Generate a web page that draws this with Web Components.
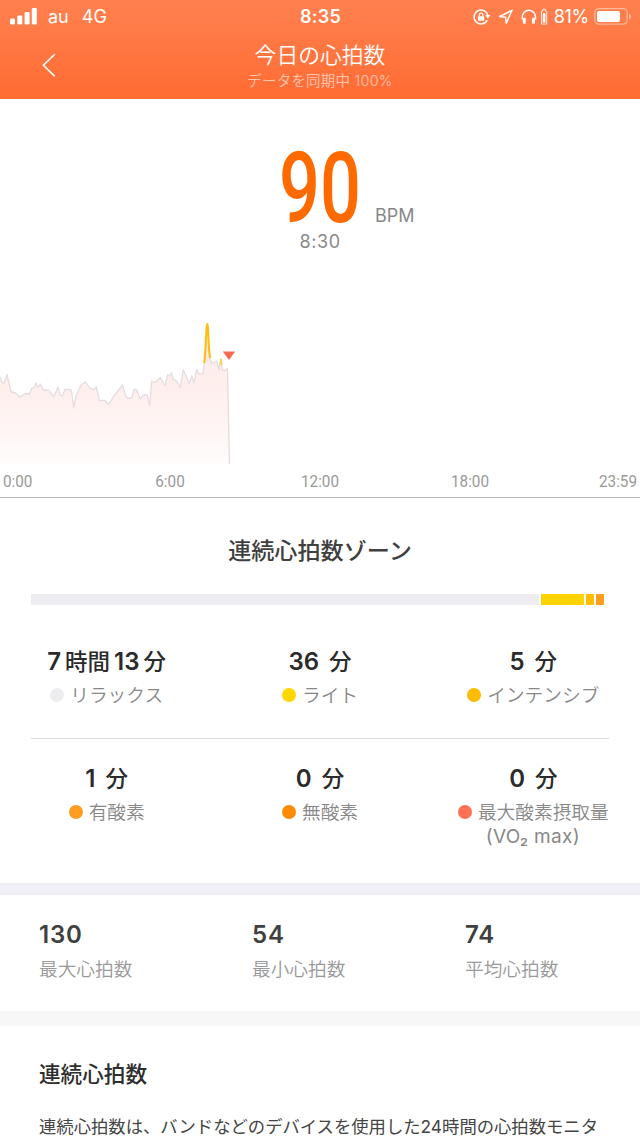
<!DOCTYPE html>
<html lang="ja">
<head>
<meta charset="utf-8">
<title>今日の心拍数</title>
<style>
  body {
    margin: 0;
    width: 640px;
    height: 1138px;
    overflow: hidden;
    background: #fff;
    font-family: Inter, 'Noto Sans CJK JP', sans-serif;
    color: #333;
  }
</style>
</head>
<body>
<heart-rate-page></heart-rate-page>

<script>
/**
 * @class StatusBar
 * @classdesc Phone status bar: signal, carrier, clock and battery.
 */
class StatusBar extends HTMLElement {
  shadowRoot = this.attachShadow({ mode: 'open' });

  connectedCallback () {
    this.shadowRoot.innerHTML = `
      <style>
        :host {
          display: grid;
          grid-template-columns: 1fr auto 1fr;
          align-items: center;
          height: 33px;
          padding: 0 9px 0 10px;
          box-sizing: border-box;
          color: #fff;
          font-size: 18px;
          line-height: 33px;
        }
        div { display: flex; align-items: center; }
        svg { display: block; flex: none; }
        .carrier { margin-left: 11px; }
        .network { margin-left: 13px; }
        .time { font-weight: 600; font-size: 18px; letter-spacing: 0.3px; }
        .right { justify-content: flex-end; }
        .percent { margin: 0 5px 0 5px; letter-spacing: -0.3px; }
      </style>
      <div>
        <svg width="27" height="17" viewBox="0 0 27 17" fill="#fff">
          <rect x="0" y="10.5" width="5" height="6" rx="1.3"/>
          <rect x="7.3" y="7.5" width="5" height="9" rx="1.3"/>
          <rect x="14.6" y="4" width="5" height="12.5" rx="1.3"/>
          <rect x="21.8" y="0" width="5" height="16.5" rx="1.3"/>
        </svg>
        <span class="carrier">au</span>
        <span class="network">4G</span>
      </div>
      <span class="time">8:35</span>
      <div class="right">
        <svg width="77" height="18" viewBox="473 7.5 77 18" fill="none" stroke="#fff" stroke-width="1.5">
          <path d="M488.3 19.6A7 7 0 1 1 488.9 15"/>
          <path d="M486.3 14.6h5l-2.5 3.6z" fill="#fff" stroke="none"/>
          <rect x="479" y="15.7" width="6.2" height="4.6" rx=".6" fill="#fff" stroke="none"/>
          <path d="M480.3 16v-1.6a1.8 1.8 0 0 1 3.6 0V16" stroke-width="1.2"/>
          <path d="M513 9.8L500.6 16l6 .7.6 6z" stroke-linejoin="round"/>
          <path d="M523.3 19v-2.6a6.6 6.6 0 0 1 13.2 0V19"/>
          <rect x="523.8" y="17.2" width="3" height="6" rx="1" fill="#fff" stroke="none"/>
          <rect x="533" y="17.2" width="3" height="6" rx="1" fill="#fff" stroke="none"/>
          <path d="M543.8 8.8h2.6v1.8h1.3v13h-5.2v-13h1.3z" stroke-width="1" opacity=".85"/>
          <rect x="543.8" y="12.6" width="2.6" height="9.6" fill="#fff" stroke="none"/>
        </svg>
        <span class="percent">81%</span>
        <svg width="37" height="18" viewBox="0 .5 37 18" fill="#fff">
          <rect x=".8" y="1.2" width="32.4" height="15.4" rx="4" fill="none" stroke="#fff" stroke-opacity=".45" stroke-width="1.3"/>
          <rect x="3" y="3.4" width="23" height="11" rx="2"/>
          <path d="M35 6q2 .8 2 3t-2 3z" opacity=".5"/>
        </svg>
      </div>
    `;
  }
}

/**
 * @class NavBar
 * @classdesc Back button, page title and the sync state below it.
 */
class NavBar extends HTMLElement {
  shadowRoot = this.attachShadow({ mode: 'open' });

  connectedCallback () {
    this.shadowRoot.innerHTML = `
      <style>
        :host {
          display: grid;
          grid-template-columns: 1fr auto 1fr;
          height: 66px;
          color: #fff;
          text-align: center;
        }
        svg { display: block; margin: 20px 0 0 41px; }
        h1 { margin: 8px 0 0; font-size: 21.8px; line-height: 28px; font-weight: 350; }
        p { margin: 2px 0 0; font-size: 14.4px; line-height: 20px; font-weight: 350; opacity: .6; letter-spacing: .3px; }
      </style>
      <svg width="16" height="26" viewBox="0 0 16 26" fill="none" stroke="#fff" stroke-width="1.6">
        <path d="M13.8 1.2L2.4 12.3l11.4 11"/>
      </svg>
      <div>
        <h1><slot></slot></h1>
        <p><slot name="status"></slot></p>
      </div>
    `;
  }
}

/**
 * @class BpmReading
 * @classdesc Large reading for the selected time.
 */
class BpmReading extends HTMLElement {
  shadowRoot = this.attachShadow({ mode: 'open' });

  connectedCallback () {
    this.shadowRoot.innerHTML = `
      <style>
        :host { display: block; height: 213px; padding-top: 48px; box-sizing: border-box; }
        .row { display: grid; grid-template-columns: 1fr 82px 1fr; align-items: baseline; height: 84px; }
        .value {
          grid-column: 2;
          font: 500 98px/84px Roboto, sans-serif;
          color: #ff6a00;
          white-space: nowrap;
          transform: scaleX(.735);
          transform-origin: 0 0;
        }
        .unit { margin-left: 14px; font-size: 18px; line-height: 22px; color: #888; }
        .time { text-align: center; font-size: 18px; line-height: 22px; letter-spacing: .6px; color: #888; }
      </style>
      <div class="row">
        <span class="value">${this.getAttribute('value')}</span>
        <span class="unit">BPM</span>
      </div>
      <div class="time">${this.getAttribute('time')}</div>
    `;
  }
}

/**
 * @class DayChart
 * @classdesc Heart rate curve of the day with its time axis.
 */
class DayChart extends HTMLElement {
  shadowRoot = this.attachShadow({ mode: 'open' });

  // x, y pairs; y counts from the top of the chart
  before = '0,66 1.7,71 4,72.5 7,63.5 11,81 15.5,82 20,86.3 25,82.5 29.5,83 31.5,77.5 34,77 36,72 38,76.5 40.3,73 43.3,79 49,79.3 53.7,86 58,76 60,84 62.5,85 64.7,78.5 70,78.5 71.5,80 73.7,96.5 76,85 81,74 85.7,71 90,77.5 94.3,78.5 96.3,75.5 99.3,89.5 105,89.5 108.5,93.5 115,83.5 122.7,74 125.3,84 127.3,87.5 132,86.5 134,78.5 136.3,78.5 140.3,88 143.3,84 147.3,84 149.7,94.5 151.7,70 154.7,71.7 160.3,66.5 165,74.7 167.7,63.7 169.7,65 171.7,61.7 173.3,68.7 175.7,69 180.3,76.5 183.3,58.7 189.3,72.5 191.7,64.7 194,71.7 196.7,58.7 199.3,63 203,62.7 204.3,52';
  peak = '204.3,52 205.4,38 206.6,17 207.3,13 208,17 209,38 210,47';
  after = '210,47 211.7,52.7 216.7,50 219,59 221,48 222.3,58 224.3,60 227.5,57.5 229.4,153';

  connectedCallback () {
    this.shadowRoot.innerHTML = `
      <style>
        :host { display: block; height: 186px; border-bottom: 1px solid #bababa; box-sizing: border-box; }
        svg { display: block; }
        .axis { display: flex; justify-content: space-between; padding: 0 3px; }
        .axis span {
          width: 34px;
          display: flex;
          justify-content: center;
          font: 400 16.8px/20px Roboto, sans-serif;
          color: #999;
          transform: scaleX(.91);
          padding-top: 5px;
        }
        .axis span:first-child { justify-content: flex-start; transform-origin: left; }
        .axis span:last-child { justify-content: flex-end; transform-origin: right; }
      </style>
      <svg width="640" height="154" viewBox="0 1 640 154" fill="none" stroke-linejoin="round">
        <defs>
          <linearGradient id="area" x1="0" y1="30" x2="0" y2="154" gradientUnits="userSpaceOnUse">
            <stop offset="0" stop-color="#fdeae8"/>
            <stop offset=".45" stop-color="#fef0ee"/>
            <stop offset="1" stop-color="#fffcfc"/>
          </linearGradient>
        </defs>
        <polygon fill="url(#area)" points="${this.before} 207.3,26 210,47 ${this.after} 0,153"/>
        <polyline stroke="#e5dcdf" stroke-width="1.3" points="${this.before}"/>
        <polyline stroke="#e5dcdf" stroke-width="1.3" points="${this.after}"/>
        <polyline stroke="#ffbd14" stroke-width="2.1" points="${this.peak}"/>
        <polyline stroke="#ffd064" stroke-width="1.4" points="219.8,54 221,48 221.8,54"/>
        <path fill="#f86a50" d="M222.8 40.5h12.4l-6.2 8.5z"/>
      </svg>
      <div class="axis">
        <span>0:00</span><span>6:00</span><span>12:00</span><span>18:00</span><span>23:59</span>
      </div>
    `;
  }
}

/**
 * @class ZoneItem
 * @classdesc Time spent in one zone, with its coloured label.
 */
class ZoneItem extends HTMLElement {
  shadowRoot = this.attachShadow({ mode: 'open' });

  connectedCallback () {
    this.shadowRoot.innerHTML = `
      <style>
        :host { display: block; text-align: center; }
        .time { font-size: 24px; line-height: 30px; font-weight: 600; color: #2b2b2b; white-space: pre; }
        .unit { font-size: 22.5px; font-weight: 500; margin-left: 10px; }
        .long .unit { margin: 0 4px; }
        .long .unit:last-child { margin-right: 0; }
        .label {
          display: flex;
          justify-content: center;
          gap: 6px;
          margin-top: 7px;
          font-size: 18.7px;
          line-height: 24px;
          font-weight: 350;
          color: #888;
          white-space: nowrap;
        }
        .label::before {
          content: '';
          flex: none;
          width: 14px;
          height: 14px;
          margin-top: 4px;
          border-radius: 50%;
          background: ${this.getAttribute('color')};
        }
        .note { margin-left: -1px; font-size: 19px; line-height: 24px; color: #888; letter-spacing: .3px; }
      </style>
      ${this.formatTime()}
      <div class="label"><slot></slot></div>
      <div class="note"><slot name="note"></slot></div>
    `;
  }

  /**
   * Wraps the units so that they are set smaller than the numbers.
   * @returns {string} The markup of the time.
   */
  formatTime () {
    const hours = this.getAttribute('hours');
    const minutes = `${this.getAttribute('minutes')}<span class="unit">分</span>`;
    return hours
      ? `<div class="time long">${hours}<span class="unit">時間</span>${minutes}</div>`
      : `<div class="time">${minutes}</div>`;
  }
}

/**
 * @class ZoneSummary
 * @classdesc Stacked bar and the grid of the six zones.
 */
class ZoneSummary extends HTMLElement {
  shadowRoot = this.attachShadow({ mode: 'open' });

  connectedCallback () {
    this.shadowRoot.innerHTML = `
      <style>
        :host { display: block; height: 385px; border-bottom: 12px solid #f0eff8; }
        h2 { margin: 0; padding-top: 37px; text-align: center; font-size: 23.1px; line-height: 32px; font-weight: 500; color: #404040; }
        .bar { display: flex; gap: 2px; margin: 27px 36px 0 31px; height: 11px; }
        .bar i:nth-child(1) { width: 508px; background: #ededf1; }
        .bar i:nth-child(2) { width: 43px; background: #ffd300; }
        .bar i:nth-child(3) { width: 8px; background: #ffbe00; }
        .bar i:nth-child(4) { width: 8px; background: #ff9d1e; }
        .zones { display: grid; grid-template-columns: repeat(3, 1fr); }
        .first { margin-top: 42px; height: 91px; }
        hr { margin: 0 31px; border: 0; height: 1px; background: #dedee0; }
        .second { padding-top: 25px; }
      </style>
      <h2>連続心拍数ゾーン</h2>
      <div class="bar"><i></i><i></i><i></i><i></i></div>
      <div class="zones first">
        <zone-item hours="7" minutes="13" color="#ededef">リラックス</zone-item>
        <zone-item minutes="36" color="#ffd600">ライト</zone-item>
        <zone-item minutes="5" color="#ffbc05">インテンシブ</zone-item>
      </div>
      <hr>
      <div class="zones second">
        <zone-item minutes="1" color="#ff9d20">有酸素</zone-item>
        <zone-item minutes="0" color="#ff8a05">無酸素</zone-item>
        <zone-item minutes="0" color="#ff7054">最大酸素摂取量<span slot="note">(VO₂ max)</span></zone-item>
      </div>
    `;
  }
}

/**
 * @class StatItem
 * @classdesc A number with its caption.
 */
class StatItem extends HTMLElement {
  shadowRoot = this.attachShadow({ mode: 'open' });

  connectedCallback () {
    this.shadowRoot.innerHTML = `
      <style>
        :host { display: block; }
        b { display: block; font-size: 24px; line-height: 30px; font-weight: 600; letter-spacing: .8px; color: #404040; }
        span { display: block; margin-top: 8px; font-size: 18.7px; line-height: 24px; font-weight: 350; color: #999; }
      </style>
      <b>${this.getAttribute('value')}</b>
      <span><slot></slot></span>
    `;
  }
}

/**
 * @class HeartRatePage
 * @classdesc The whole page, top to bottom.
 */
class HeartRatePage extends HTMLElement {
  shadowRoot = this.attachShadow({ mode: 'open' });

  connectedCallback () {
    this.shadowRoot.innerHTML = `
      <style>
        :host { display: block; }
        header { background: linear-gradient(#ff814f, #ff6b33); }
        .stats {
          display: grid;
          grid-template-columns: 213px 213px 1fr;
          height: 91px;
          padding: 25px 0 0 39px;
          border-bottom: 15px solid #f7f7f7;
        }
        article { padding: 32px 0 0 39px; }
        h3 { margin: 0; font-size: 21.6px; line-height: 32px; font-weight: 500; color: #2e2e2e; }
        p { margin: 23px 0 0; font-size: 17.33px; line-height: 28px; color: #444; white-space: nowrap; }
      </style>
      <header>
        <status-bar></status-bar>
        <nav-bar>今日の心拍数<span slot="status">データを同期中 100%</span></nav-bar>
      </header>
      <bpm-reading value="90" time="8:30"></bpm-reading>
      <day-chart></day-chart>
      <zone-summary></zone-summary>
      <section class="stats">
        <stat-item value="130">最大心拍数</stat-item>
        <stat-item value="54">最小心拍数</stat-item>
        <stat-item value="74">平均心拍数</stat-item>
      </section>
      <article>
        <h3>連続心拍数</h3>
        <p>連続心拍数は、バンドなどのデバイスを使用した24時間の心拍数モニタ</p>
      </article>
    `;
  }
}

customElements.define('status-bar', StatusBar);
customElements.define('nav-bar', NavBar);
customElements.define('bpm-reading', BpmReading);
customElements.define('day-chart', DayChart);
customElements.define('zone-item', ZoneItem);
customElements.define('zone-summary', ZoneSummary);
customElements.define('stat-item', StatItem);
customElements.define('heart-rate-page', HeartRatePage);
</script>
</body>
</html>
